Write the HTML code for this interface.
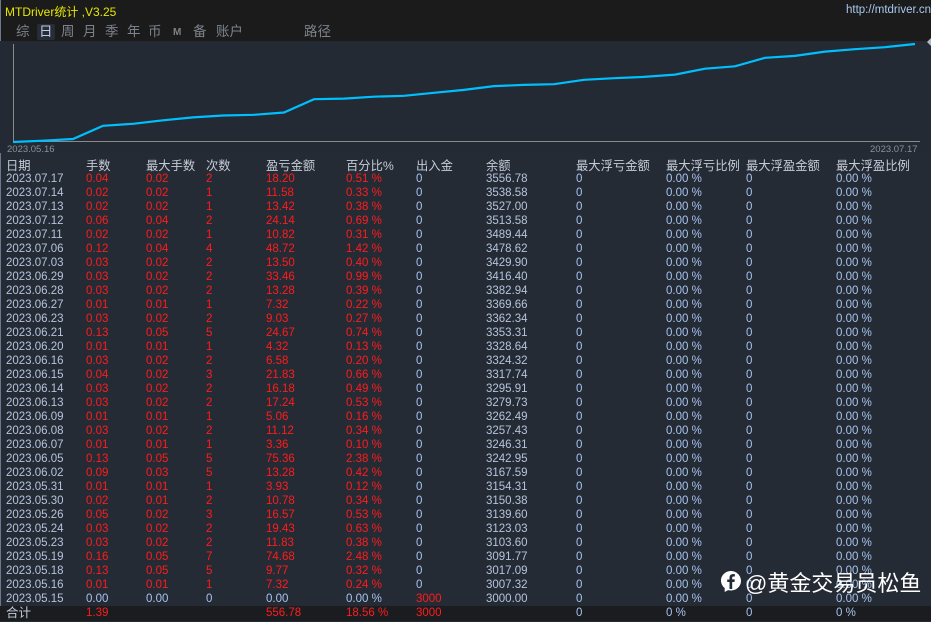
<!DOCTYPE html>
<html><head><meta charset="utf-8">
<style>
*{margin:0;padding:0;box-sizing:border-box}
body{width:931px;height:621px;overflow:hidden;background:#252b35;font-family:"Liberation Sans","Noto Sans CJK SC",sans-serif;position:relative}
#top{position:absolute;left:0;top:0;width:931px;height:41px;background:#1b1b1b}
.t{position:absolute;white-space:nowrap}
.tab{position:absolute;top:23px;font-size:13.5px;color:#7c838c;line-height:17px}
#chart{position:absolute;left:0;top:41px;width:931px;height:112px;background:#232a33}
#rows{position:absolute;left:0;top:1px;width:931px;height:621px}
.r{position:absolute;left:0;width:931px;height:14px;font-size:11.5px;line-height:14px;color:#b4c4dc}
.r span{position:absolute;top:0;white-space:nowrap}
.red{color:#ff1c1c}
.blu{color:#a8c4ee}
.h{position:absolute;top:158px;font-size:12.3px;color:#c4ccd8;line-height:16px;white-space:nowrap}
</style></head><body>
<div id="top"></div>
<div style="position:absolute;left:0;top:0;width:1px;height:621px;background:#6a7890"></div>
<div class="t" style="left:5px;top:3px;font-size:12px;color:#e6e600">MTDriver统计 ,V3.25</div>
<div class="t" style="left:846px;top:4px;font-size:11.5px;color:#a8c8f0">http://mtdriver.cn</div>
<div style="position:absolute;left:37px;top:24px;width:18px;height:16px;background:#262d38;border-radius:2px"></div>
<div class="tab" style="left:16px">综</div>
<div class="tab" style="left:39px;color:#c0ccdc">日</div>
<div class="tab" style="left:61px">周</div>
<div class="tab" style="left:83px">月</div>
<div class="tab" style="left:105px">季</div>
<div class="tab" style="left:127px">年</div>
<div class="tab" style="left:148px">币</div>
<div class="tab" style="left:173px;font-size:10px;font-weight:bold;top:24px">M</div>
<div class="tab" style="left:193px">备</div>
<div class="tab" style="left:216px">账户</div>
<div class="tab" style="left:304px">路径</div>
<div id="chart"></div>
<svg style="position:absolute;left:0;top:0" width="931" height="160">
<line x1="13.5" y1="44" x2="13.5" y2="142" stroke="#8a8a8a" stroke-width="1"/>
<line x1="13" y1="141.5" x2="920" y2="141.5" stroke="#8a8a8a" stroke-width="1"/>
<polygon points="931,38 927,42 931,46" fill="#b0b8c4"/>
<polyline fill="none" stroke="#00bfff" stroke-width="2.2" points="13,142 43,140.7 73,139 103,125.8 133,123.8 163,120.3 193,117.4 223,115.5 254,114.8 284,112.5 314,99.2 344,98.6 374,96.7 404,95.8 434,92.8 464,89.9 494,86.1 524,84.9 554,84.2 584,79.8 614,78.2 644,76.9 675,74.6 705,68.7 735,66.3 765,57.8 795,55.9 825,51.6 855,49.2 885,47.2 915,44"/>
<text x="7" y="152" font-size="9.5" fill="#8c9098" font-family="Liberation Sans,sans-serif">2023.05.16</text>
<text x="870" y="152" font-size="9.5" fill="#8c9098" font-family="Liberation Sans,sans-serif">2023.07.17</text>
</svg>
<div class="h" style="left:6px">日期</div>
<div class="h" style="left:86px">手数</div>
<div class="h" style="left:146px">最大手数</div>
<div class="h" style="left:206px">次数</div>
<div class="h" style="left:266px">盈亏金额</div>
<div class="h" style="left:346px">百分比%</div>
<div class="h" style="left:416px">出入金</div>
<div class="h" style="left:486px">余额</div>
<div class="h" style="left:576px">最大浮亏金额</div>
<div class="h" style="left:666px">最大浮亏比例</div>
<div class="h" style="left:746px">最大浮盈金额</div>
<div class="h" style="left:836px">最大浮盈比例</div>
<div id="rows">
<div class="r" style="top:171px"><span style="left:6px">2023.07.17</span><span class="red" style="left:86px">0.04</span><span class="red" style="left:146px">0.02</span><span class="red" style="left:206px">2</span><span class="red" style="left:266px">18.20</span><span class="red" style="left:346px">0.51 %</span><span class="blu" style="left:416px">0</span><span style="left:486px">3556.78</span><span class="blu" style="left:576px">0</span><span class="blu" style="left:666px">0.00 %</span><span class="blu" style="left:746px">0</span><span class="blu" style="left:836px">0.00 %</span></div>
<div class="r" style="top:185px"><span style="left:6px">2023.07.14</span><span class="red" style="left:86px">0.02</span><span class="red" style="left:146px">0.02</span><span class="red" style="left:206px">1</span><span class="red" style="left:266px">11.58</span><span class="red" style="left:346px">0.33 %</span><span class="blu" style="left:416px">0</span><span style="left:486px">3538.58</span><span class="blu" style="left:576px">0</span><span class="blu" style="left:666px">0.00 %</span><span class="blu" style="left:746px">0</span><span class="blu" style="left:836px">0.00 %</span></div>
<div class="r" style="top:199px"><span style="left:6px">2023.07.13</span><span class="red" style="left:86px">0.02</span><span class="red" style="left:146px">0.02</span><span class="red" style="left:206px">1</span><span class="red" style="left:266px">13.42</span><span class="red" style="left:346px">0.38 %</span><span class="blu" style="left:416px">0</span><span style="left:486px">3527.00</span><span class="blu" style="left:576px">0</span><span class="blu" style="left:666px">0.00 %</span><span class="blu" style="left:746px">0</span><span class="blu" style="left:836px">0.00 %</span></div>
<div class="r" style="top:213px"><span style="left:6px">2023.07.12</span><span class="red" style="left:86px">0.06</span><span class="red" style="left:146px">0.04</span><span class="red" style="left:206px">2</span><span class="red" style="left:266px">24.14</span><span class="red" style="left:346px">0.69 %</span><span class="blu" style="left:416px">0</span><span style="left:486px">3513.58</span><span class="blu" style="left:576px">0</span><span class="blu" style="left:666px">0.00 %</span><span class="blu" style="left:746px">0</span><span class="blu" style="left:836px">0.00 %</span></div>
<div class="r" style="top:227px"><span style="left:6px">2023.07.11</span><span class="red" style="left:86px">0.02</span><span class="red" style="left:146px">0.02</span><span class="red" style="left:206px">1</span><span class="red" style="left:266px">10.82</span><span class="red" style="left:346px">0.31 %</span><span class="blu" style="left:416px">0</span><span style="left:486px">3489.44</span><span class="blu" style="left:576px">0</span><span class="blu" style="left:666px">0.00 %</span><span class="blu" style="left:746px">0</span><span class="blu" style="left:836px">0.00 %</span></div>
<div class="r" style="top:241px"><span style="left:6px">2023.07.06</span><span class="red" style="left:86px">0.12</span><span class="red" style="left:146px">0.04</span><span class="red" style="left:206px">4</span><span class="red" style="left:266px">48.72</span><span class="red" style="left:346px">1.42 %</span><span class="blu" style="left:416px">0</span><span style="left:486px">3478.62</span><span class="blu" style="left:576px">0</span><span class="blu" style="left:666px">0.00 %</span><span class="blu" style="left:746px">0</span><span class="blu" style="left:836px">0.00 %</span></div>
<div class="r" style="top:255px"><span style="left:6px">2023.07.03</span><span class="red" style="left:86px">0.03</span><span class="red" style="left:146px">0.02</span><span class="red" style="left:206px">2</span><span class="red" style="left:266px">13.50</span><span class="red" style="left:346px">0.40 %</span><span class="blu" style="left:416px">0</span><span style="left:486px">3429.90</span><span class="blu" style="left:576px">0</span><span class="blu" style="left:666px">0.00 %</span><span class="blu" style="left:746px">0</span><span class="blu" style="left:836px">0.00 %</span></div>
<div class="r" style="top:269px"><span style="left:6px">2023.06.29</span><span class="red" style="left:86px">0.03</span><span class="red" style="left:146px">0.02</span><span class="red" style="left:206px">2</span><span class="red" style="left:266px">33.46</span><span class="red" style="left:346px">0.99 %</span><span class="blu" style="left:416px">0</span><span style="left:486px">3416.40</span><span class="blu" style="left:576px">0</span><span class="blu" style="left:666px">0.00 %</span><span class="blu" style="left:746px">0</span><span class="blu" style="left:836px">0.00 %</span></div>
<div class="r" style="top:283px"><span style="left:6px">2023.06.28</span><span class="red" style="left:86px">0.03</span><span class="red" style="left:146px">0.02</span><span class="red" style="left:206px">2</span><span class="red" style="left:266px">13.28</span><span class="red" style="left:346px">0.39 %</span><span class="blu" style="left:416px">0</span><span style="left:486px">3382.94</span><span class="blu" style="left:576px">0</span><span class="blu" style="left:666px">0.00 %</span><span class="blu" style="left:746px">0</span><span class="blu" style="left:836px">0.00 %</span></div>
<div class="r" style="top:297px"><span style="left:6px">2023.06.27</span><span class="red" style="left:86px">0.01</span><span class="red" style="left:146px">0.01</span><span class="red" style="left:206px">1</span><span class="red" style="left:266px">7.32</span><span class="red" style="left:346px">0.22 %</span><span class="blu" style="left:416px">0</span><span style="left:486px">3369.66</span><span class="blu" style="left:576px">0</span><span class="blu" style="left:666px">0.00 %</span><span class="blu" style="left:746px">0</span><span class="blu" style="left:836px">0.00 %</span></div>
<div class="r" style="top:311px"><span style="left:6px">2023.06.23</span><span class="red" style="left:86px">0.03</span><span class="red" style="left:146px">0.02</span><span class="red" style="left:206px">2</span><span class="red" style="left:266px">9.03</span><span class="red" style="left:346px">0.27 %</span><span class="blu" style="left:416px">0</span><span style="left:486px">3362.34</span><span class="blu" style="left:576px">0</span><span class="blu" style="left:666px">0.00 %</span><span class="blu" style="left:746px">0</span><span class="blu" style="left:836px">0.00 %</span></div>
<div class="r" style="top:325px"><span style="left:6px">2023.06.21</span><span class="red" style="left:86px">0.13</span><span class="red" style="left:146px">0.05</span><span class="red" style="left:206px">5</span><span class="red" style="left:266px">24.67</span><span class="red" style="left:346px">0.74 %</span><span class="blu" style="left:416px">0</span><span style="left:486px">3353.31</span><span class="blu" style="left:576px">0</span><span class="blu" style="left:666px">0.00 %</span><span class="blu" style="left:746px">0</span><span class="blu" style="left:836px">0.00 %</span></div>
<div class="r" style="top:339px"><span style="left:6px">2023.06.20</span><span class="red" style="left:86px">0.01</span><span class="red" style="left:146px">0.01</span><span class="red" style="left:206px">1</span><span class="red" style="left:266px">4.32</span><span class="red" style="left:346px">0.13 %</span><span class="blu" style="left:416px">0</span><span style="left:486px">3328.64</span><span class="blu" style="left:576px">0</span><span class="blu" style="left:666px">0.00 %</span><span class="blu" style="left:746px">0</span><span class="blu" style="left:836px">0.00 %</span></div>
<div class="r" style="top:353px"><span style="left:6px">2023.06.16</span><span class="red" style="left:86px">0.03</span><span class="red" style="left:146px">0.02</span><span class="red" style="left:206px">2</span><span class="red" style="left:266px">6.58</span><span class="red" style="left:346px">0.20 %</span><span class="blu" style="left:416px">0</span><span style="left:486px">3324.32</span><span class="blu" style="left:576px">0</span><span class="blu" style="left:666px">0.00 %</span><span class="blu" style="left:746px">0</span><span class="blu" style="left:836px">0.00 %</span></div>
<div class="r" style="top:367px"><span style="left:6px">2023.06.15</span><span class="red" style="left:86px">0.04</span><span class="red" style="left:146px">0.02</span><span class="red" style="left:206px">3</span><span class="red" style="left:266px">21.83</span><span class="red" style="left:346px">0.66 %</span><span class="blu" style="left:416px">0</span><span style="left:486px">3317.74</span><span class="blu" style="left:576px">0</span><span class="blu" style="left:666px">0.00 %</span><span class="blu" style="left:746px">0</span><span class="blu" style="left:836px">0.00 %</span></div>
<div class="r" style="top:381px"><span style="left:6px">2023.06.14</span><span class="red" style="left:86px">0.03</span><span class="red" style="left:146px">0.02</span><span class="red" style="left:206px">2</span><span class="red" style="left:266px">16.18</span><span class="red" style="left:346px">0.49 %</span><span class="blu" style="left:416px">0</span><span style="left:486px">3295.91</span><span class="blu" style="left:576px">0</span><span class="blu" style="left:666px">0.00 %</span><span class="blu" style="left:746px">0</span><span class="blu" style="left:836px">0.00 %</span></div>
<div class="r" style="top:395px"><span style="left:6px">2023.06.13</span><span class="red" style="left:86px">0.03</span><span class="red" style="left:146px">0.02</span><span class="red" style="left:206px">2</span><span class="red" style="left:266px">17.24</span><span class="red" style="left:346px">0.53 %</span><span class="blu" style="left:416px">0</span><span style="left:486px">3279.73</span><span class="blu" style="left:576px">0</span><span class="blu" style="left:666px">0.00 %</span><span class="blu" style="left:746px">0</span><span class="blu" style="left:836px">0.00 %</span></div>
<div class="r" style="top:409px"><span style="left:6px">2023.06.09</span><span class="red" style="left:86px">0.01</span><span class="red" style="left:146px">0.01</span><span class="red" style="left:206px">1</span><span class="red" style="left:266px">5.06</span><span class="red" style="left:346px">0.16 %</span><span class="blu" style="left:416px">0</span><span style="left:486px">3262.49</span><span class="blu" style="left:576px">0</span><span class="blu" style="left:666px">0.00 %</span><span class="blu" style="left:746px">0</span><span class="blu" style="left:836px">0.00 %</span></div>
<div class="r" style="top:423px"><span style="left:6px">2023.06.08</span><span class="red" style="left:86px">0.03</span><span class="red" style="left:146px">0.02</span><span class="red" style="left:206px">2</span><span class="red" style="left:266px">11.12</span><span class="red" style="left:346px">0.34 %</span><span class="blu" style="left:416px">0</span><span style="left:486px">3257.43</span><span class="blu" style="left:576px">0</span><span class="blu" style="left:666px">0.00 %</span><span class="blu" style="left:746px">0</span><span class="blu" style="left:836px">0.00 %</span></div>
<div class="r" style="top:437px"><span style="left:6px">2023.06.07</span><span class="red" style="left:86px">0.01</span><span class="red" style="left:146px">0.01</span><span class="red" style="left:206px">1</span><span class="red" style="left:266px">3.36</span><span class="red" style="left:346px">0.10 %</span><span class="blu" style="left:416px">0</span><span style="left:486px">3246.31</span><span class="blu" style="left:576px">0</span><span class="blu" style="left:666px">0.00 %</span><span class="blu" style="left:746px">0</span><span class="blu" style="left:836px">0.00 %</span></div>
<div class="r" style="top:451px"><span style="left:6px">2023.06.05</span><span class="red" style="left:86px">0.13</span><span class="red" style="left:146px">0.05</span><span class="red" style="left:206px">5</span><span class="red" style="left:266px">75.36</span><span class="red" style="left:346px">2.38 %</span><span class="blu" style="left:416px">0</span><span style="left:486px">3242.95</span><span class="blu" style="left:576px">0</span><span class="blu" style="left:666px">0.00 %</span><span class="blu" style="left:746px">0</span><span class="blu" style="left:836px">0.00 %</span></div>
<div class="r" style="top:465px"><span style="left:6px">2023.06.02</span><span class="red" style="left:86px">0.09</span><span class="red" style="left:146px">0.03</span><span class="red" style="left:206px">5</span><span class="red" style="left:266px">13.28</span><span class="red" style="left:346px">0.42 %</span><span class="blu" style="left:416px">0</span><span style="left:486px">3167.59</span><span class="blu" style="left:576px">0</span><span class="blu" style="left:666px">0.00 %</span><span class="blu" style="left:746px">0</span><span class="blu" style="left:836px">0.00 %</span></div>
<div class="r" style="top:479px"><span style="left:6px">2023.05.31</span><span class="red" style="left:86px">0.01</span><span class="red" style="left:146px">0.01</span><span class="red" style="left:206px">1</span><span class="red" style="left:266px">3.93</span><span class="red" style="left:346px">0.12 %</span><span class="blu" style="left:416px">0</span><span style="left:486px">3154.31</span><span class="blu" style="left:576px">0</span><span class="blu" style="left:666px">0.00 %</span><span class="blu" style="left:746px">0</span><span class="blu" style="left:836px">0.00 %</span></div>
<div class="r" style="top:493px"><span style="left:6px">2023.05.30</span><span class="red" style="left:86px">0.02</span><span class="red" style="left:146px">0.01</span><span class="red" style="left:206px">2</span><span class="red" style="left:266px">10.78</span><span class="red" style="left:346px">0.34 %</span><span class="blu" style="left:416px">0</span><span style="left:486px">3150.38</span><span class="blu" style="left:576px">0</span><span class="blu" style="left:666px">0.00 %</span><span class="blu" style="left:746px">0</span><span class="blu" style="left:836px">0.00 %</span></div>
<div class="r" style="top:507px"><span style="left:6px">2023.05.26</span><span class="red" style="left:86px">0.05</span><span class="red" style="left:146px">0.02</span><span class="red" style="left:206px">3</span><span class="red" style="left:266px">16.57</span><span class="red" style="left:346px">0.53 %</span><span class="blu" style="left:416px">0</span><span style="left:486px">3139.60</span><span class="blu" style="left:576px">0</span><span class="blu" style="left:666px">0.00 %</span><span class="blu" style="left:746px">0</span><span class="blu" style="left:836px">0.00 %</span></div>
<div class="r" style="top:521px"><span style="left:6px">2023.05.24</span><span class="red" style="left:86px">0.03</span><span class="red" style="left:146px">0.02</span><span class="red" style="left:206px">2</span><span class="red" style="left:266px">19.43</span><span class="red" style="left:346px">0.63 %</span><span class="blu" style="left:416px">0</span><span style="left:486px">3123.03</span><span class="blu" style="left:576px">0</span><span class="blu" style="left:666px">0.00 %</span><span class="blu" style="left:746px">0</span><span class="blu" style="left:836px">0.00 %</span></div>
<div class="r" style="top:535px"><span style="left:6px">2023.05.23</span><span class="red" style="left:86px">0.03</span><span class="red" style="left:146px">0.02</span><span class="red" style="left:206px">2</span><span class="red" style="left:266px">11.83</span><span class="red" style="left:346px">0.38 %</span><span class="blu" style="left:416px">0</span><span style="left:486px">3103.60</span><span class="blu" style="left:576px">0</span><span class="blu" style="left:666px">0.00 %</span><span class="blu" style="left:746px">0</span><span class="blu" style="left:836px">0.00 %</span></div>
<div class="r" style="top:549px"><span style="left:6px">2023.05.19</span><span class="red" style="left:86px">0.16</span><span class="red" style="left:146px">0.05</span><span class="red" style="left:206px">7</span><span class="red" style="left:266px">74.68</span><span class="red" style="left:346px">2.48 %</span><span class="blu" style="left:416px">0</span><span style="left:486px">3091.77</span><span class="blu" style="left:576px">0</span><span class="blu" style="left:666px">0.00 %</span><span class="blu" style="left:746px">0</span><span class="blu" style="left:836px">0.00 %</span></div>
<div class="r" style="top:563px"><span style="left:6px">2023.05.18</span><span class="red" style="left:86px">0.13</span><span class="red" style="left:146px">0.05</span><span class="red" style="left:206px">5</span><span class="red" style="left:266px">9.77</span><span class="red" style="left:346px">0.32 %</span><span class="blu" style="left:416px">0</span><span style="left:486px">3017.09</span><span class="blu" style="left:576px">0</span><span class="blu" style="left:666px">0.00 %</span><span class="blu" style="left:746px">0</span><span class="blu" style="left:836px">0.00 %</span></div>
<div class="r" style="top:577px"><span style="left:6px">2023.05.16</span><span class="red" style="left:86px">0.01</span><span class="red" style="left:146px">0.01</span><span class="red" style="left:206px">1</span><span class="red" style="left:266px">7.32</span><span class="red" style="left:346px">0.24 %</span><span class="blu" style="left:416px">0</span><span style="left:486px">3007.32</span><span class="blu" style="left:576px">0</span><span class="blu" style="left:666px">0.00 %</span><span class="blu" style="left:746px">0</span><span class="blu" style="left:836px">0.00 %</span></div>
<div class="r" style="top:591px"><span style="left:6px">2023.05.15</span><span class="blu" style="left:86px">0.00</span><span class="blu" style="left:146px">0.00</span><span class="blu" style="left:206px">0</span><span class="blu" style="left:266px">0.00</span><span class="blu" style="left:346px">0.00 %</span><span class="red" style="left:416px">3000</span><span style="left:486px">3000.00</span><span class="blu" style="left:576px">0</span><span class="blu" style="left:666px">0.00 %</span><span class="blu" style="left:746px">0</span><span class="blu" style="left:836px">0.00 %</span></div>
</div>
<div class="r" style="top:606px;height:15px;background:#1a1c20;line-height:15px"><span style="left:6px;font-size:12.5px;color:#c4ccd8">合计</span><span class="red" style="left:86px">1.39</span><span class="red" style="left:266px">556.78</span><span class="red" style="left:346px">18.56 %</span><span class="red" style="left:416px">3000</span><span class="blu" style="left:576px">0</span><span class="blu" style="left:666px">0 %</span><span class="blu" style="left:746px">0</span><span class="blu" style="left:836px">0 %</span></div>

<svg style="position:absolute;left:720px;top:570px" width="22" height="23" viewBox="0 0 22 23">
<path d="M11 1C5.5 1 1 5.3 1 10.6c0 3 1.4 5.6 3.7 7.4V22l3.4-1.9c.9.3 1.9.4 2.9.4 5.5 0 10-4.3 10-9.6S16.5 1 11 1z" fill="#fff"/>
<path d="M12.2 19v-7h2.3l.3-2.6h-2.6V7.8c0-.8.2-1.3 1.3-1.3h1.4V4.2c-.3 0-1.1-.1-2-.1-2 0-3.4 1.2-3.4 3.5v1.9H7.2V12h2.3v7z" fill="#252b35"/>
</svg>
<div class="t" style="left:745px;top:566px;font-size:22px;color:#fff;font-family:'Liberation Sans','Noto Sans CJK SC',sans-serif">@黄金交易员松鱼</div>
</body></html>
